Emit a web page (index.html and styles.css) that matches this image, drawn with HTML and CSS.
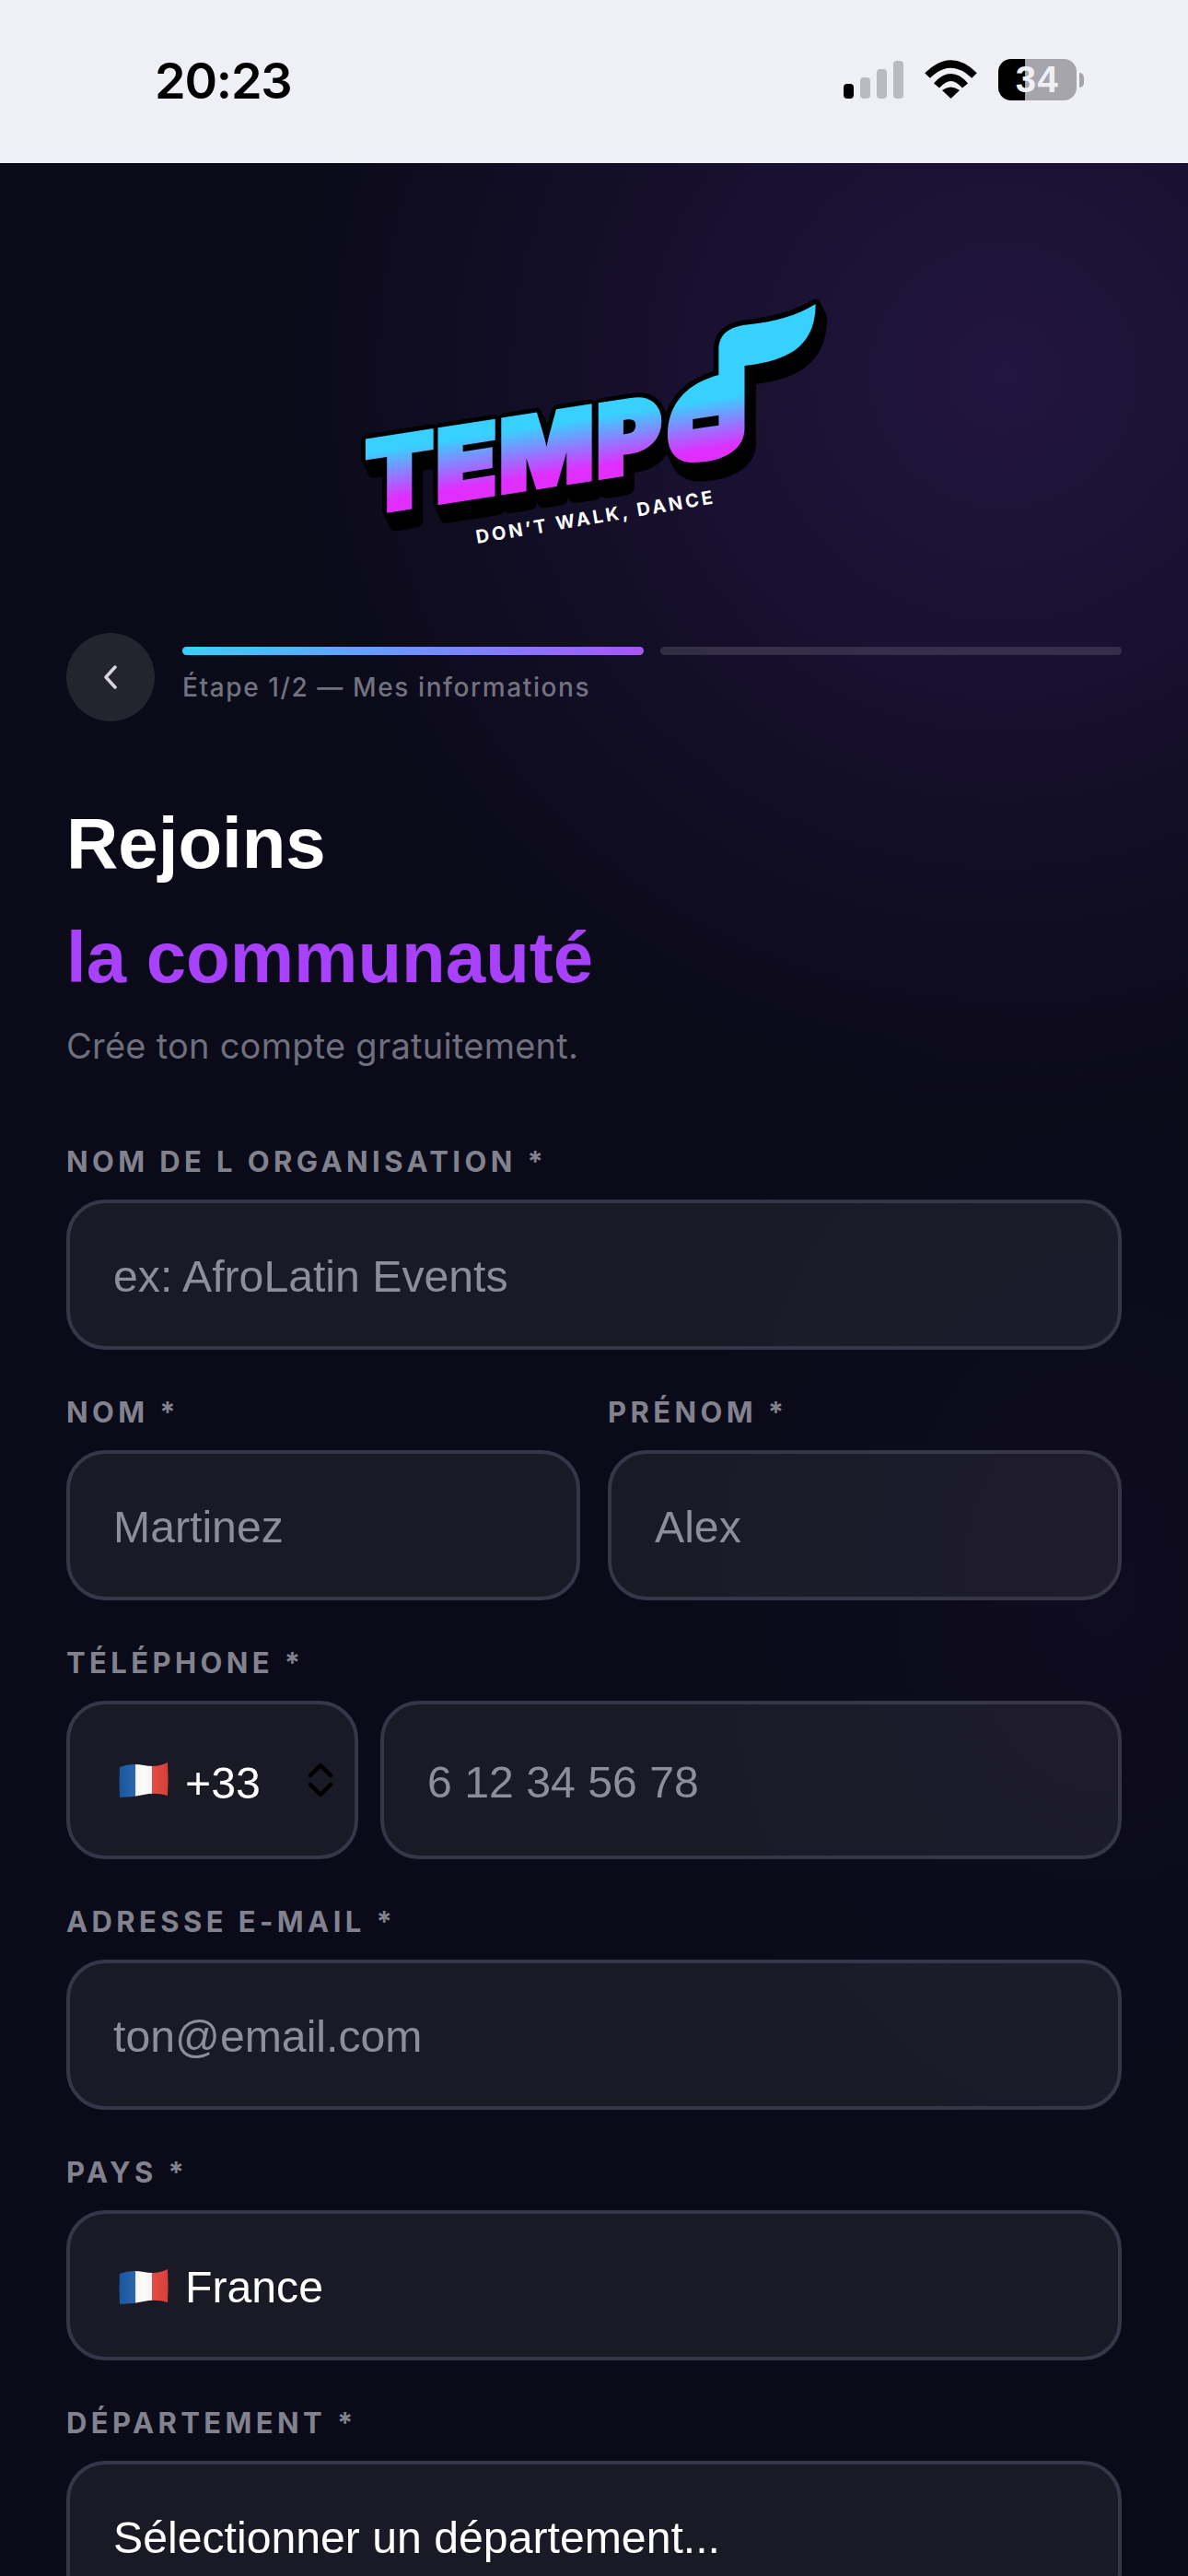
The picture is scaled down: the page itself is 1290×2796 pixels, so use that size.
FILE: index.html
```html
<!DOCTYPE html>
<html lang="fr">
<head>
<meta charset="utf-8">
<title>Tempo — Inscription</title>
<link rel="stylesheet" href="styles.css">
</head>
<body>
<header class="status">
  <span class="status-time">20:23</span>
  <div class="status-icons">
    <div class="signal">
      <i class="bar bar-1 bar-on"></i><i class="bar bar-2"></i><i class="bar bar-3"></i><i class="bar bar-4"></i>
    </div>
    <svg class="wifi" width="57" height="42" viewBox="0 0 57 42">
      <path class="wifi-arc" d="M3 17Q28.500 -8 54 17"/>
      <path class="wifi-arc" d="M13 28Q28.500 10 44 28"/>
      <path d="M19 33Q28.500 26 38 33L28.500 42Z"/>
    </svg>
    <div class="battery"><div class="battery-body"><span class="battery-level">34</span></div><i class="battery-nub"></i></div>
  </div>
</header>

<main class="page">
  <svg class="logo" width="550" height="310" viewBox="0 0 550 310" role="img" aria-label="Tempo">
    <defs>
      <linearGradient id="textFill" gradientUnits="userSpaceOnUse" x1="0" y1="196" x2="0" y2="250">
        <stop offset="0" stop-color="#38d0ff"/><stop offset="1" stop-color="#e02eff"/>
      </linearGradient>
      <linearGradient id="noteFill" gradientUnits="userSpaceOnUse" x1="0" y1="196" x2="0" y2="250" gradientTransform="skewY(-8.800)">
        <stop offset="0" stop-color="#38d0ff"/><stop offset="1" stop-color="#e02eff"/>
      </linearGradient>
      <path id="noteShape" fill-rule="evenodd" d="M515.600 30C495 43 470 49 445 52C422 54 410.400 62 410.400 80L410.400 107C380 115 355 135 355 172C355 192 366 202 382 202C412 202 438.500 190 438.500 165L438.500 97C480 92 515.600 80 515.600 30ZM382.300 155L410.400 150.700L410.400 161.700L382.300 165.700Z"/>
      <text id="wordmark" class="logo-word" transform="skewY(-8.800)" x="27" y="261.500" textLength="324" lengthAdjust="spacingAndGlyphs">TEMP</text>
      <g id="logoBack" class="logo-back">
        <use href="#noteShape"/>
        <use href="#wordmark" class="logo-back-word"/>
      </g>
    </defs>
    <use href="#logoBack"/>
    <use href="#logoBack" x="2" y="4"/>
    <use href="#logoBack" x="4" y="8"/>
    <use href="#logoBack" x="6" y="12"/>
    <use href="#logoBack" x="7" y="15"/>
    <use href="#noteShape" fill="url(#noteFill)"/>
    <use href="#wordmark" class="logo-front-word" fill="url(#textFill)" stroke="url(#textFill)"/>
    <text class="logo-tag" transform="translate(148 290) rotate(-9.600)">DON’T WALK, DANCE</text>
  </svg>

  <div class="progress-row">
    <button class="back" type="button" aria-label="Retour">
      <svg width="14" height="26" viewBox="0 0 14 26"><path d="M12 2L2 13L12 24"/></svg>
    </button>
    <div class="progress">
      <div class="progress-bars"><i class="step step-done"></i><i class="step"></i></div>
      <p class="progress-label">Étape 1/2 — Mes informations</p>
    </div>
  </div>

  <h1 class="title"><span>Rejoins</span><span class="title-accent">la communauté</span></h1>
  <p class="subtitle">Crée ton compte gratuitement.</p>

  <form class="form">
    <div class="field">
      <label class="label">NOM DE L ORGANISATION *</label>
      <div class="input placeholder">ex: AfroLatin Events</div>
    </div>
    <div class="two-cols">
      <div class="field">
        <label class="label">NOM *</label>
        <div class="input placeholder">Martinez</div>
      </div>
      <div class="field">
        <label class="label">PRÉNOM *</label>
        <div class="input placeholder">Alex</div>
      </div>
    </div>
    <div class="field">
      <label class="label">TÉLÉPHONE *</label>
      <div class="phone-row">
        <div class="input input-tall dial">
          <svg class="flag" viewBox="0 0 54 40"><use href="#flagFr"/></svg>
          <span class="dial-code">+33</span>
          <svg class="updown" width="26" height="38" viewBox="0 0 26 38"><path d="M2 14L13 3L24 14M2 24L13 35L24 24"/></svg>
        </div>
        <div class="input input-tall input-grow placeholder">6 12 34 56 78</div>
      </div>
    </div>
    <div class="field">
      <label class="label">ADRESSE E-MAIL *</label>
      <div class="input placeholder">ton@email.com</div>
    </div>
    <div class="field">
      <label class="label">PAYS *</label>
      <div class="input country">
        <svg class="flag" viewBox="0 0 54 40">
          <defs>
            <clipPath id="flagWave"><path d="M1 6Q13 1 27 4T53 1Q54 20 53 37Q40 33 27 36T1 39Q0 22 1 6Z"/></clipPath>
            <linearGradient id="flagShade" x1="0" y1="0" x2="1" y2="0">
              <stop offset="0" stop-color="#000" stop-opacity=".1"/>
              <stop offset=".5" stop-color="#fff" stop-opacity=".1"/>
              <stop offset="1" stop-color="#000" stop-opacity=".08"/>
            </linearGradient>
            <g id="flagFr" clip-path="url(#flagWave)">
              <rect width="18" height="40" fill="#1c5fb0"/>
              <rect x="18" width="18" height="40" fill="#fbfbfb"/>
              <rect x="36" width="18" height="40" fill="#e8453c"/>
              <rect width="54" height="40" fill="url(#flagShade)"/>
            </g>
          </defs>
          <use href="#flagFr"/>
        </svg>
        <span>France</span>
      </div>
    </div>
    <div class="field">
      <label class="label">DÉPARTEMENT *</label>
      <div class="input">Sélectionner un département...</div>
    </div>
  </form>
</main>
</body>
</html>
```

FILE: styles.css
```css
* { box-sizing: border-box; }

html, body {
  margin: 0;
  height: 2796px;
  overflow: hidden;
  background: #0a0a18;
}

body { font-family: "Liberation Sans", Arial, sans-serif; }

/* Top system bar */
.status {
  height: 177px;
  background: #eff0f5;
  display: flex;
  justify-content: space-between;
  align-items: flex-start;
  padding: 0 113px 0 168px;
}

.status-time {
  margin-top: 53px;
  font: 600 54px/70px Inter, sans-serif;
  color: #000;
  letter-spacing: -1.200px;
}

.status-icons {
  display: flex;
  align-items: flex-end;
  margin-top: 64px;
  height: 45px;
}

.signal {
  display: flex;
  align-items: flex-end;
  gap: 7px;
  height: 41px;
  margin-bottom: 2px;
}

.bar {
  display: block;
  width: 11px;
  border-radius: 4px;
  background: #b9bac2;
}
.bar-1 { height: 16px; }
.bar-2 { height: 23px; }
.bar-3 { height: 32px; }
.bar-4 { height: 41px; }
.bar-on { background: #000; }

.wifi {
  margin: 0 23px;
  margin-bottom: 2px;
}
.wifi-arc {
  fill: none;
  stroke: #000;
  stroke-width: 8;
}

.battery {
  display: flex;
  align-items: center;
  height: 45px;
}
.battery-body {
  width: 85px;
  height: 45px;
  border-radius: 14px;
  background: linear-gradient(90deg, #000 0 29px, #a5a5ab 29px);
  display: flex;
  align-items: center;
  justify-content: center;
}
.battery-level {
  font: 700 40px/45px "Liberation Sans", sans-serif;
  letter-spacing: 1.500px;
  color: #eff0f5;
}
.battery-nub {
  display: block;
  width: 5px;
  height: 16px;
  margin-left: 3px;
  border-radius: 0 5px 5px 0;
  background: #a5a5ab;
}

/* Page canvas */
.page {
  height: 2619px;
  overflow: hidden;
  padding: 123px 72px 0;
  background:
    radial-gradient(circle 800px at 1090px 230px, #221540 0, rgba(34, 21, 64, 0) 100%),
    radial-gradient(ellipse 500px 700px at 1200px 1550px, rgba(60, 36, 110, 0.08), rgba(60, 36, 110, 0) 100%),
    #0a0a18;
}

/* Wordmark */
.logo {
  display: block;
  margin: 0 auto;
}
.logo-word {
  font: 900 107px Inter, sans-serif;
  letter-spacing: 3px;
}
.logo-back {
  fill: #000;
  stroke: #000;
  stroke-width: 11;
  stroke-linejoin: round;
}
.logo-back-word { stroke-width: 16; }
.logo-front-word {
  stroke-width: 6;
  stroke-linejoin: miter;
}
.logo-tag {
  font: 700 20px Inter, sans-serif;
  letter-spacing: 3.100px;
  fill: #fff;
}

/* Progress header */
.progress-row {
  display: flex;
  gap: 30px;
  height: 96px;
  margin-top: 77px;
}
.back {
  flex: none;
  width: 96px;
  height: 96px;
  padding: 0;
  border: 0;
  border-radius: 50%;
  background: #24242f;
  display: flex;
  align-items: center;
  justify-content: center;
}
.back path {
  fill: none;
  stroke: #d6d6dc;
  stroke-width: 3.500;
  stroke-linecap: round;
  stroke-linejoin: round;
}
.progress {
  flex: 1;
  padding-top: 15px;
}
.progress-bars {
  display: grid;
  grid-template-columns: 1fr 1fr;
  gap: 18px;
}
.step {
  display: block;
  height: 9px;
  border-radius: 5px;
  background: rgba(255, 255, 255, 0.13);
}
.step-done { background: linear-gradient(90deg, #38d0ff, #a855f7); }
.progress-label {
  margin: 15px 0 0;
  font: 500 28px/40px Inter, sans-serif;
  letter-spacing: 1.600px;
  color: #727280;
}

/* Heading */
.title {
  margin: 70px 0 0;
  font-size: 78px;
  line-height: 124px;
  font-weight: 700;
  color: #fff;
}
.title span { display: block; }
.title-accent { color: #a741fb; }

.subtitle {
  margin: 12px 0 0;
  font: 400 38px/44px Inter, sans-serif;
  letter-spacing: 0.250px;
  color: #6f6f7d;
}

/* Form fields */
.form {
  display: flex;
  flex-direction: column;
  gap: 50px;
  margin-top: 86px;
}
.field {
  display: flex;
  flex-direction: column;
  gap: 23px;
  min-width: 0;
}
.label {
  font: 700 31px/36px Inter, sans-serif;
  letter-spacing: 4.400px;
  color: #82828f;
}
.input {
  flex: none;
  height: 163px;
  border: 4px solid #363648;
  border-radius: 42px;
  background: rgba(255, 255, 255, 0.065);
  display: flex;
  align-items: center;
  padding: 3px 47px 0;
  font-size: 48.200px;
  color: #fff;
}
.placeholder { color: #8e8e9b; }
.two-cols {
  display: grid;
  grid-template-columns: 1fr 1fr;
  gap: 30px;
}
.phone-row {
  display: flex;
  gap: 24px;
}
.input-tall { height: 172px; }
.input-grow { flex: 1; }
.dial {
  width: 317px;
  padding: 0 0 0 53px;
}
.flag {
  flex: none;
  width: 54px;
  height: 40px;
  margin-right: 18px;
}
.dial-code { margin-right: 52px; padding-top: 5px; }
.updown {
  flex: none;
  width: 26px;
}
.updown path {
  fill: none;
  stroke: #000;
  stroke-width: 4.500;
  stroke-linecap: round;
  stroke-linejoin: round;
}
.country { padding-left: 53px; }
```
